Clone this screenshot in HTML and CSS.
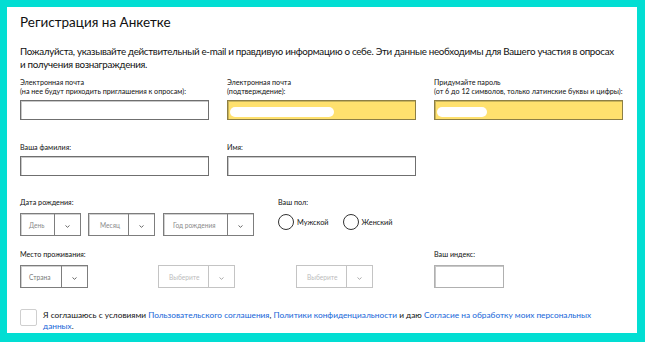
FILE: index.html
```html
<!DOCTYPE html>
<html lang="ru">
<head>
    <meta charset="UTF-8">
    <title>Регистрация на Анкетке</title>
    <link rel="stylesheet" href="styles.css">
</head>
<body>
    <div class="page">
        <h1 class="title">Регистрация на Анкетке</h1>
        <p class="intro">Пожалуйста, указывайте действительный e-mail и правдивую информацию о себе. Эти данные необходимы для Вашего участия в опросах<br>и получения вознаграждения.</p>

        <div class="grid3">
            <div class="field">
                <div class="lbl">Электронная почта<br>(на нее будут приходить приглашения к опросам):</div>
                <div class="inp"></div>
            </div>
            <div class="field">
                <div class="lbl">Электронная почта<br>(подтверждение):</div>
                <div class="inp filled"><span class="mask mask-long"></span></div>
            </div>
            <div class="field">
                <div class="lbl">Придумайте пароль<br>(от 6 до 12 символов, только латинские буквы и цифры):</div>
                <div class="inp filled"><span class="mask mask-short"></span></div>
            </div>
        </div>

        <div class="grid3 row-name">
            <div class="field">
                <div class="lbl">Ваша фамилия:</div>
                <div class="inp"></div>
            </div>
            <div class="field">
                <div class="lbl">Имя:</div>
                <div class="inp"></div>
            </div>
        </div>

        <div class="row-birth">
            <div class="birth">
                <div class="lbl">Дата рождения:</div>
                <div class="selects">
                    <div class="sel sel-day"><span class="val">День</span><span class="arr"><svg width="5" height="3" viewBox="0 0 5 3"><path d="M0.5 0.5 L2.5 2.3 L4.5 0.5" fill="none" stroke="#666" stroke-width="1"/></svg></span></div>
                    <div class="sel sel-month"><span class="val">Месяц</span><span class="arr"><svg width="5" height="3" viewBox="0 0 5 3"><path d="M0.5 0.5 L2.5 2.3 L4.5 0.5" fill="none" stroke="#666" stroke-width="1"/></svg></span></div>
                    <div class="sel sel-year"><span class="val">Год рождения</span><span class="arr"><svg width="5" height="3" viewBox="0 0 5 3"><path d="M0.5 0.5 L2.5 2.3 L4.5 0.5" fill="none" stroke="#666" stroke-width="1"/></svg></span></div>
                </div>
            </div>
            <div class="gender">
                <div class="lbl">Ваш пол:</div>
                <div class="radios">
                    <label class="radio"><span class="circle"></span>Мужской</label>
                    <label class="radio"><span class="circle"></span>Женский</label>
                </div>
            </div>
        </div>

        <div class="row-place">
            <div class="lbl">Место проживания:</div>
            <div class="lbl col4">Ваш индекс:</div>
            <div class="sel sel-country"><span class="val">Страна</span><span class="arr"><svg width="5" height="3" viewBox="0 0 5 3"><path d="M0.5 0.5 L2.5 2.3 L4.5 0.5" fill="none" stroke="#666" stroke-width="1"/></svg></span></div>
            <div class="sel sel-off"><span class="val">Выберите</span><span class="arr"><svg width="5" height="3" viewBox="0 0 5 3"><path d="M0.5 0.5 L2.5 2.3 L4.5 0.5" fill="none" stroke="#aaa" stroke-width="1"/></svg></span></div>
            <div class="sel sel-off"><span class="val">Выберите</span><span class="arr"><svg width="5" height="3" viewBox="0 0 5 3"><path d="M0.5 0.5 L2.5 2.3 L4.5 0.5" fill="none" stroke="#aaa" stroke-width="1"/></svg></span></div>
            <div class="inp zip"></div>
        </div>

        <div class="agree">
            <span class="check"></span>
            <p class="agree-text">Я соглашаюсь с условиями <a href="#">Пользовательского соглашения</a>, <a href="#">Политики конфиденциальности</a> и даю <a href="#">Согласие на обработку моих персональных<br>данных</a>.</p>
        </div>
    </div>
</body>
</html>
```

FILE: styles.css
```css
*{
    box-sizing: border-box;
}
body{
    margin: 0;
    background: #02ded3;
    font-family: Lato, "Noto Sans", sans-serif;
    color: #111;
}
.page{
    width: 630px;
    height: 326px;
    margin: 7px 0 0 7px;
    padding: 5px 0 0 13px;
    background: #fff;
    overflow: hidden;
}
.title{
    margin: 0;
    font-size: 13.5px;
    font-weight: normal;
    line-height: 20px;
}
.intro{
    margin: 13px 0 0;
    font-size: 9.8px;
    line-height: 13px;
    letter-spacing: -0.3px;
    white-space: nowrap;
}
.lbl{
    font-size: 7.2px;
    line-height: 9px;
    white-space: nowrap;
}

/* три колонки полей */
.grid3{
    display: grid;
    grid-template-columns: 189px 189px 189px;
    column-gap: 18px;
    margin-top: 7px;
}
.field{
    display: flex;
    flex-direction: column;
}
.field .lbl{
    flex: 1;
    margin-bottom: 4px;
}
.inp{
    height: 20px;
    border: 1px solid #6f6f6f;
    box-shadow: inset 1px 1px 0 #c8c8c8;
    background: #fff;
}
.inp.filled{
    background: #ffe16e;
    border-color: #8d7f45;
    box-shadow: inset 1px 1px 0 #c9b45a;
    padding: 6px 0 0 2px;
}
.mask{
    display: block;
    height: 10px;
    border-radius: 5px;
    background: #fff;
}
.mask-long{
    width: 104px;
}
.mask-short{
    width: 50px;
}
.row-name{
    margin-top: 23px;
}

/* дата рождения и пол */
.row-birth{
    display: flex;
    margin-top: 22px;
}
.birth .lbl,
.gender .lbl{
    margin-bottom: 6px;
}
.selects{
    display: flex;
}
.sel{
    display: flex;
    height: 23px;
    border: 1px solid #7d7d7d;
    box-shadow: inset 1px 1px 0 #d0d0d0;
    font-size: 6.6px;
    color: #8a8a8a;
}
.sel .val{
    display: flex;
    align-items: center;
    padding-left: 7px;
    border-right: 1px solid #7d7d7d;
    white-space: nowrap;
}
.sel .arr{
    display: flex;
    align-items: center;
    justify-content: center;
    width: 26px;
    padding-top: 4px;
}
.sel-day{
    width: 61px;
    margin-right: 7px;
}
.sel-day .val{
    width: 35px;
    padding-left: 8px;
}
.sel-month{
    width: 67px;
    margin-right: 8px;
}
.sel-month .val{
    width: 41px;
    padding-left: 11px;
}
.sel-year{
    width: 91px;
}
.sel-year .val{
    width: 65px;
    padding-left: 9px;
}
.gender{
    margin-left: 24px;
}
.radios{
    display: flex;
    gap: 14px;
    padding-top: 1px;
}
.radio{
    display: flex;
    align-items: center;
    font-size: 7.3px;
    color: #111;
}
.circle{
    width: 16px;
    height: 16px;
    margin-right: 3px;
    border: 1px solid #333;
    border-radius: 50%;
}

/* место проживания */
.row-place{
    display: grid;
    grid-template-columns: 138px 138px 138px auto;
    grid-template-rows: auto auto;
    margin-top: 14px;
}
.row-place .lbl{
    margin-bottom: 6px;
}
.row-place .col4{
    grid-column: 4;
}
.row-place .sel{
    grid-row: 2;
    width: 77px;
}
.row-place .sel .val{
    width: 51px;
}
.sel-country{
    height: 23px;
    width: 68px !important;
}
.sel-country .val{
    width: 43px !important;
    padding-left: 8px;
    color: #777;
}
.sel-off{
    border-color: #c4c4c4;
    box-shadow: none;
    color: #bcbcbc;
}
.sel-off .val{
    border-right-color: #c4c4c4;
    padding-left: 10px;
}
.zip{
    grid-row: 2;
    width: 70px;
    height: 23px;
    border-color: #b0b0b0;
}

/* согласие */
.agree{
    display: flex;
    align-items: flex-start;
    margin-top: 21px;
}
.check{
    flex: none;
    width: 17px;
    height: 17px;
    margin-right: 6px;
    border: 1px solid #cfcfcf;
    border-radius: 2px;
}
.agree-text{
    margin: 1px 0 0;
    font-size: 8.3px;
    line-height: 11px;
    white-space: nowrap;
}
.agree-text a{
    color: #1565d8;
    text-decoration: none;
}
```
